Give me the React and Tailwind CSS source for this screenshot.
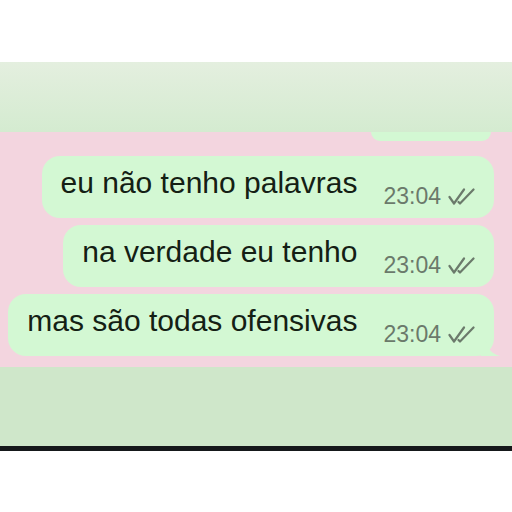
import React from "react";

function Checks() {
  return (
    <svg width="27" height="17" viewBox="0 0 27 17" className="ml-[7px] mt-[22px] shrink-0" fill="none" stroke="#6b7a6b" strokeWidth="2.2" strokeLinecap="round" strokeLinejoin="round">
      <path d="M1.5 9 L6 15.5 L16 1.5" />
      <path d="M10.5 14 L12 15.5 L25.5 1.5" />
    </svg>
  );
}

function Bubble({ text, tail }) {
  return (
    <div className="relative flex items-start h-[62px] pl-[19px] pr-[19px] pt-[10px] rounded-[18px] bg-[#d3f8d3]">
      <span className="text-[30px] leading-[34px] text-[#142014] whitespace-nowrap">{text}</span>
      <span className="ml-[26px] mt-[17px] text-[23px] leading-[26px] text-[#6b7a6b] whitespace-nowrap">23:04</span>
      <Checks />
      {tail && (
        <svg className="absolute right-[-7px] bottom-0" width="20" height="22" viewBox="0 0 20 22">
          <path d="M0 0 L4 0 C4 10 8 17 14 20 C16 21 17 21.5 19 22 L0 22 Z" fill="#d3f8d3" />
        </svg>
      )}
    </div>
  );
}

export default function App() {
  return (
    <div className="w-[512px] h-[512px] bg-white flex flex-col overflow-hidden" style={{ fontFamily: '"Liberation Sans", Arial, sans-serif' }}>
      <div className="h-[62px] shrink-0 bg-white" />
      <div className="h-[70px] shrink-0 bg-gradient-to-b from-[#e4efdf] to-[#d4ebd0]" />
      <div className="h-[235px] shrink-0 bg-[#f3d5df] flex flex-col items-end pr-[18px] gap-[7px]">
        <div className="w-[120px] h-[9px] mr-[3px] rounded-b-[12px] bg-[#d3f8d3] mb-[8px]" />
        <Bubble text="eu não tenho palavras" />
        <Bubble text="na verdade eu tenho" />
        <Bubble text="mas são todas ofensivas" tail />
      </div>
      <div className="h-[79px] shrink-0 bg-[#cfe7ca]" />
      <div className="h-[5px] shrink-0 bg-[#15181a]" />
      <div className="flex-1 bg-white" />
    </div>
  );
}
